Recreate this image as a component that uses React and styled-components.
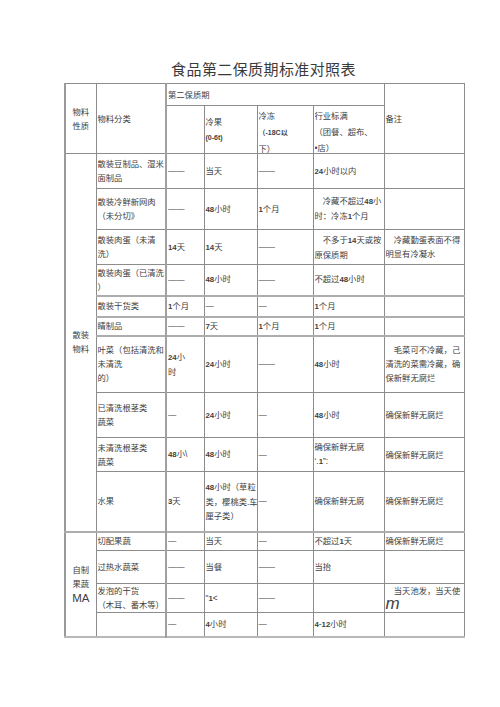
import React from 'react'
import styled, { createGlobalStyle } from 'styled-components'

const GlobalStyle = createGlobalStyle`
  body {
    margin: 0;
    background: #fff;
  }
`

const Page = styled.div`
  padding: 59px 0 40px 64px;
  width: 399px;
  font-family: "Liberation Sans", "Noto Sans CJK SC", sans-serif;
  color: #404040;
`

const Title = styled.h1`
  margin: 0 0 4px;
  height: 20px;
  line-height: 20px;
  font-family: "Noto Sans CJK SC", sans-serif;
  font-weight: 400;
  font-size: 15px;
  letter-spacing: 0.4px;
  text-align: center;
  color: #3a3a3a;
`

const Sheet = styled.table`
  width: 399px;
  table-layout: fixed;
  border-collapse: collapse;
  font-size: 8.3px;
  line-height: 14px;
  border-left: 2px solid #9a9a9a;
  border-bottom: 2px solid #b8b8b8;
`

const Col = styled.col`
  width: ${p => p.$w}px;
`

const Row = styled.tr`
  height: ${p => p.$h}px;
  ${p => p.$thick && 'td { border-top: 2px solid #adadad; }'}
`

const Cell = styled.td`
  border: 1px solid #8c8c8c;
  padding: ${p => (p.$top ? '2px 1px 0' : '0 1px')};
  vertical-align: ${p => (p.$top ? 'top' : 'middle')};
  text-align: ${p => (p.$center ? 'center' : 'left')};
  overflow: hidden;
  ${p => p.$edge && 'border-left: 2px solid #a0a0a0;'}
`

const Line = styled.div`
  white-space: nowrap;
  line-height: ${p => p.$lh || 14}px;
  text-indent: ${p => (p.$indent ? '1em' : '0')};
`

const HeadClip = styled.div`
  max-height: 45px;
  overflow: hidden;
`

const Num = styled.b`
  font-family: "Liberation Sans", sans-serif;
  font-weight: 700;
  font-size: 7.8px;
`

const Small = styled.b`
  font-size: 7px;
  font-weight: 700;
`

const Big = styled.span`
  font-size: 11.5px;
  font-family: "Liberation Sans", sans-serif;
`

const BigM = styled.span`
  font-size: 17px;
  font-style: italic;
  font-family: "Liberation Sans", sans-serif;
`

const rich = s =>
  s.split(/(\d+)/).map((part, i) =>
    /^\d+$/.test(part) ? <Num key={i}>{part}</Num> : part
  )

const Lines = ({ text, indent }) =>
  text.split('\n').map((line, i) => (
    <Line key={i} $indent={indent && i === 0}>{rich(line)}</Line>
  ))

const widths = [31, 70, 38, 53, 56, 71, 80]

const loose = [
  { h: 35, cells: ['散装豆制品、湿米\n面制品', '——', '当天', '——', '24小时以内', ''] },
  { h: 41, cells: ['散装冷鲜新网肉\n（未分切》', '——', '48小时', '1个月', { t: '冷藏不超过48小\n时：冷冻1个月', indent: true }, ''] },
  { h: 35, cells: ['散装肉蛋（未清\n洗）', '14天', '14天', '——', { t: '不多于14天或按\n原保质期', indent: true }, { t: '冷藏勤蛋表面不得\n明显有冷凝水', indent: true }] },
  { h: 31, cells: ['散装肉蛋（已清洗\n）', '——', '48小时', '——', '不超过48小时', ''] },
  { h: 21, thick: true, cells: ['散装干货类', '1个月', '—', '—', '1个月', ''] },
  { h: 19, thick: true, cells: ['睛制品', '——', '7天', '1个月', '1个月', ''] },
  { h: 57, thick: true, cells: ['叶菜（包括清洗和\n未清洗\n的）', '24小\n时', '24小时', '——', '48小时', { t: '毛菜可不冷藏，己\n清洗的菜需冷藏，确\n保新鲜无腐烂', indent: true }] },
  { h: 45, cells: ['已清洗根茎类\n蔬菜', '—', '24小时', '—', '48小时', '确保新鲜无腐烂'] },
  { h: 34, cells: ['未清洗根茎类\n蔬菜', '48小\\', '48小时', '—', '确保新鲜无腐\n‘.1”:', '确保新鲜无腐烂'] },
  { h: 60, cells: ['水果', '3天', '48小时（草粒\n类，樱桃类.车\n厘子类）', '—', '确保新鲜无腐', '确保新鲜无腐烂'] }
]

const homemade = [
  { h: 19, thick: true, cells: ['切配果蔬', '—', '当天', '—', '不超过1天', '确保新鲜无腐烂'] },
  { h: 33, cells: ['过热水蔬菜', '——', '当餐', '——', '当抬', ''] },
  { h: 27, cells: ['发泡的干货\n（木耳、番木等）', '——', '"1<', '——', '', 'm'] },
  { h: 24, cells: ['', '—', '4小时', '—', '4-12小时', ''] }
]

function DataCells ({ cells }) {
  return cells.map((c, i) => {
    const text = typeof c === 'string' ? c : c.t
    const indent = typeof c === 'object' && c.indent
    if (text === 'm') {
      return (
        <Cell key={i}>
          <Line $indent>当天池发，当天使</Line>
          <Line $lh={12}><BigM>m</BigM></Line>
        </Cell>
      )
    }
    return (
      <Cell key={i} $edge={i === 1}>
        <Lines text={text} indent={indent} />
      </Cell>
    )
  })
}

function Group ({ label, rows }) {
  return rows.map((r, idx) => (
    <Row key={idx} $h={r.h} $thick={r.thick}>
      {idx === 0 && <Cell rowSpan={rows.length} $center>{label}</Cell>}
      <DataCells cells={r.cells} />
    </Row>
  ))
}

export default function App () {
  return (
    <Page>
      <GlobalStyle />
      <Title>食品第二保质期标准对照表</Title>
      <Sheet>
        <colgroup>
          {widths.map((w, i) => <Col key={i} $w={w} />)}
        </colgroup>
        <tbody>
          <Row $h={22}>
            <Cell rowSpan={2} $center><Lines text={'物料\n性质'} /></Cell>
            <Cell rowSpan={2}>物料分类</Cell>
            <Cell colSpan={4} $edge>第二保质期</Cell>
            <Cell rowSpan={2}>备注</Cell>
          </Row>
          <Row $h={47}>
            <Cell $edge />
            <Cell>
              <Line $lh={16}>冷果</Line>
              <Line $lh={14}><Small>(0-6t)</Small></Line>
            </Cell>
            <Cell $top>
              <HeadClip>
                <Line $lh={16}>冷冻</Line>
                <Line $lh={16}><Small>（-18C以</Small></Line>
                <Line $lh={16}>下）</Line>
              </HeadClip>
            </Cell>
            <Cell $top>
              <HeadClip>
                <Line $lh={16}>行业标满</Line>
                <Line $lh={16}>（团餐、超布、</Line>
                <Line $lh={16}>•店）</Line>
              </HeadClip>
            </Cell>
          </Row>
          <Group label={<Lines text={'散装\n物料'} />} rows={loose} />
          <Group
            label={<><Lines text={'自制\n果蔬'} /><Line><Big>MA</Big></Line></>}
            rows={homemade}
          />
        </tbody>
      </Sheet>
    </Page>
  )
}
